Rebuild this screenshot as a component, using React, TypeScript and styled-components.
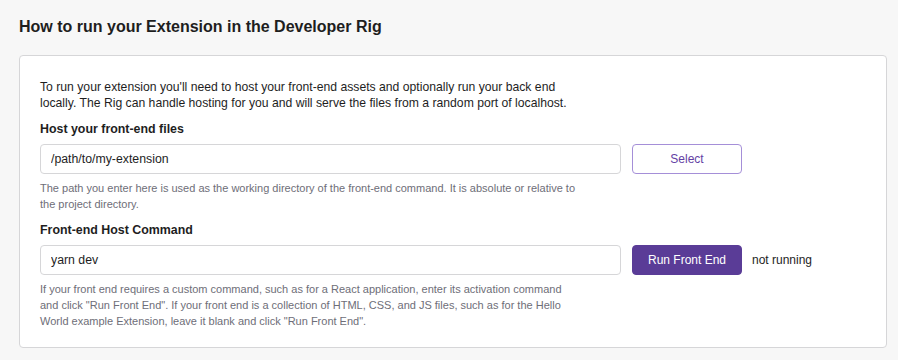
import styled, { createGlobalStyle } from 'styled-components'

const GlobalStyle = createGlobalStyle`
  html, body {
    margin: 0;
    padding: 0;
    background: #f7f7f7;
    font-family: 'Liberation Sans', Arial, sans-serif;
    color: #1e1e1e;
  }
`

export default function App() {
  return (
    <>
      <GlobalStyle />
      <Page>
        <Title>How to run your Extension in the Developer Rig</Title>
        <Card>
          <Intro>
            To run your extension you'll need to host your front-end assets and optionally run your back end
            <br />
            locally. The Rig can handle hosting for you and will serve the files from a random port of localhost.
          </Intro>

          <Field>
            <Label>Host your front-end files</Label>
            <Row>
              <TextInput defaultValue='/path/to/my-extension' />
              <Button variant='outline'>Select</Button>
            </Row>
            <Help>
              The path you enter here is used as the working directory of the front-end command. It is absolute or
              relative to
              <br />
              the project directory.
            </Help>
          </Field>

          <Field>
            <Label>Front-end Host Command</Label>
            <Row>
              <TextInput defaultValue='yarn dev' />
              <Button variant='solid'>Run Front End</Button>
              <Status>not running</Status>
            </Row>
            <Help>
              If your front end requires a custom command, such as for a React application, enter its activation
              command
              <br />
              and click "Run Front End". If your front end is a collection of HTML, CSS, and JS files, such as for the
              Hello
              <br />
              World example Extension, leave it blank and click "Run Front End".
            </Help>
          </Field>
        </Card>
      </Page>
    </>
  )
}

const Page = styled.div`
  padding: 16px 11px 12px 19px;
`

const Title = styled.h1`
  margin: 0 0 17px 0;
  font-size: 16px;
  line-height: 22px;
  font-weight: 700;
  color: #1e1e1e;
`

const Card = styled.div`
  background: #fff;
  border: 1px solid #d6d6d8;
  border-radius: 4px;
  padding: 24px 20px 18px 20px;
`

const Intro = styled.p`
  margin: 0;
  font-size: 12.2px;
  line-height: 15.5px;
  color: #1e1e1e;
`

const Field = styled.div`
  margin-top: 10px;
  display: flex;
  flex-direction: column;
`

const Label = styled.div`
  font-size: 12.4px;
  line-height: 16px;
  font-weight: 700;
  color: #1e1e1e;
  margin-bottom: 7px;
`

const Row = styled.div`
  display: flex;
  align-items: center;
`

const TextInput = styled.input`
  box-sizing: border-box;
  width: 581px;
  height: 30px;
  padding: 0 10px;
  border: 1px solid #d6d6d8;
  border-radius: 4px;
  font-family: 'Liberation Sans', Arial, sans-serif;
  font-size: 12.3px;
  color: #1e1e1e;
  background: #fff;
  outline: none;
`

const Button = styled.button<{ variant: 'solid' | 'outline' }>`
  box-sizing: border-box;
  width: 110px;
  height: 30px;
  margin-left: 11px;
  padding: 0;
  border-radius: 4px;
  font-family: 'Liberation Sans', Arial, sans-serif;
  font-size: 12px;
  cursor: pointer;
  border: 1px solid ${p => (p.variant === 'solid' ? '#5a3c97' : '#a58fd8')};
  background: ${p => (p.variant === 'solid' ? '#5a3c97' : '#fff')};
  color: ${p => (p.variant === 'solid' ? '#fff' : '#6441a4')};
`

const Status = styled.span`
  margin-left: 10px;
  font-size: 12px;
  color: #1e1e1e;
`

const Help = styled.p`
  margin: 6px 0 0 0;
  font-size: 11px;
  line-height: 16px;
  color: #6e6e78;
`
